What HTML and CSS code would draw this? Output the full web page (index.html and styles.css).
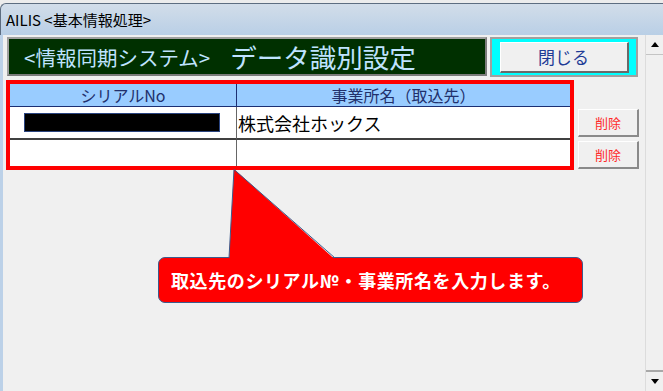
FILE: index.html
```html
<!DOCTYPE html>
<html lang="ja">
  <head>
    <meta charset="UTF-8" />
    <meta name="viewport" content="width=device-width, initial-scale=1.0" />
    <title>AILIS &lt;基本情報処理&gt;</title>
    <link rel="stylesheet" href="styles.css">
  </head>
  <body>
    <div class="window">
      <!-- タイトルバー -->
      <div class="titlebar">AILIS &lt;基本情報処理&gt;</div>

      <div class="client">
        <div class="content">
          <!-- 見出し + 閉じる -->
          <div class="top-row">
            <div class="banner">
              <span class="sub">&lt;情報同期システム&gt;</span>
              <span class="main">データ識別設定</span>
            </div>
            <div class="close-frame">
              <button class="close-btn">閉じる</button>
            </div>
          </div>

          <!-- 一覧 -->
          <div class="grid-row">
            <div class="grid-box">
              <div class="cell hdr col1">シリアルNo</div>
              <div class="cell hdr">事業所名（取込先）</div>
              <div class="cell row1 col1"><span class="mask"></span></div>
              <div class="cell row1 name">株式会社ホックス</div>
              <div class="cell row2 col1"></div>
              <div class="cell row2"></div>
            </div>
            <div class="del-col">
              <button class="del-btn">削除</button>
              <button class="del-btn">削除</button>
            </div>
          </div>

          <!-- 吹き出し -->
          <div class="callout">
            <svg class="tail" width="180" height="92" viewBox="0 0 180 92">
              <polygon points="70,90.5 75,0 176,90.5" fill="#ff0000" />
              <polyline points="70,89 75,0.5 176,89" fill="none" stroke="#3d5b8c" stroke-width="1" />
            </svg>
            <span>取込先のシリアル№・事業所名を入力します。</span>
          </div>
        </div>

        <!-- スクロールバー -->
        <div class="scrollbar">
          <div class="sb-up"><span class="arrow-up"></span></div>
          <div class="sb-track"></div>
          <div class="sb-down"><span class="arrow-down"></span></div>
        </div>
      </div>
    </div>
  </body>
</html>
```

FILE: styles.css
```css
body {
  margin: 0;
  background-color: #ececec;
  font-family: "Noto Sans CJK JP", "Liberation Sans", sans-serif;
  overflow: hidden;
}
.window {
  margin-top: 3px;
  height: 388px;
  display: flex;
  flex-direction: column;
}
.titlebar {
  height: 31px;
  border-top: 1px solid #5d6d80;
  border-left: 1px solid #5d6d80;
  border-top-left-radius: 6px;
  background: linear-gradient(#d2dde9, #b9cfe6);
  font-size: 15px;
  color: #000;
  display: flex;
  align-items: center;
  padding-left: 5px;
}
.client {
  flex: 1;
  display: flex;
  border-left: 3px solid #bcd1e8;
  background-color: #f0f0f0;
}
.content {
  flex: 1;
  position: relative;
  padding: 2px 0 0 3px;
}
.top-row {
  display: flex;
  align-items: flex-start;
}
.banner {
  width: 480px;
  height: 39px;
  box-sizing: border-box;
  margin-left: 1px;
  background-color: #003000;
  border: 2px solid;
  border-color: #a0a0a0 #7c7c7c #7c7c7c #a0a0a0;
  display: flex;
  align-items: center;
  padding-left: 15px;
  color: #bfe3ff;
  white-space: nowrap;
}
.banner .sub {
  font-size: 20.5px;
}
.banner .main {
  font-size: 26.5px;
  margin-left: 20px;
}
.close-frame {
  width: 148px;
  height: 40px;
  box-sizing: border-box;
  margin-left: 3px;
  background-color: #00ffff;
  border: 2px solid #a0a0a0;
  display: flex;
  align-items: center;
  justify-content: center;
}
.close-btn {
  width: 129px;
  height: 31px;
  box-sizing: border-box;
  padding: 0;
  background-color: #f0f0f0;
  border-style: solid;
  border-width: 1px 2px 2px 1px;
  border-color: #ffffff #6a6a6a #6a6a6a #ffffff;
  font-family: "Noto Sans CJK JP", sans-serif;
  font-size: 17px;
  color: #1f3c96;
}
.grid-row {
  display: flex;
  margin-top: 3px;
}
.grid-box {
  width: 568px;
  height: 90px;
  box-sizing: border-box;
  border: 4px solid #ff0000;
  display: grid;
  grid-template-columns: 227px 333px;
  grid-template-rows: 23px 33px 26px;
}
.cell {
  box-sizing: border-box;
  background-color: #fff;
  display: flex;
  align-items: center;
}
.hdr {
  background-color: #99ccff;
  border-bottom: 1px solid #1c2f73;
  justify-content: center;
  font-size: 16px;
  color: #21306c;
}
.col1 {
  border-right: 1px solid #666;
}
.hdr.col1 {
  border-right-color: #1c2f73;
}
.row1 {
  border-bottom: 2px solid #404040;
}
.mask {
  display: block;
  margin-left: 14px;
  width: 196px;
  height: 19px;
  box-sizing: border-box;
  background-color: #000;
  border: 1px solid #2a4480;
}
.name {
  padding-left: 1px;
  font-size: 18px;
  color: #000;
}
.del-col {
  display: flex;
  flex-direction: column;
  gap: 4px;
  margin-left: 4px;
  padding-top: 29px;
}
.del-btn {
  width: 61px;
  height: 28px;
  box-sizing: border-box;
  padding: 0;
  background-color: #f0f0f0;
  border-style: solid;
  border-width: 1px 2px 2px 1px;
  border-color: #ffffff #8a8a8a #8a8a8a #ffffff;
  font-family: "Noto Sans CJK JP", sans-serif;
  font-size: 13px;
  color: #ff2a2a;
}
.callout {
  position: absolute;
  left: 155px;
  top: 222px;
  width: 425px;
  height: 46px;
  box-sizing: border-box;
  background-color: #ff0000;
  border: 1px solid #3d5b8c;
  border-radius: 7px;
  color: #fff;
  font-weight: bold;
  font-size: 18px;
  letter-spacing: 0.6px;
  display: flex;
  align-items: center;
  padding-left: 12px;
  white-space: nowrap;
}
.tail {
  position: absolute;
  left: 0;
  top: -89px;
  overflow: visible;
}
.scrollbar {
  width: 17px;
  border-left: 1px solid #dcdcdc;
  display: flex;
  flex-direction: column;
  background-color: #f0f0f0;
}
.sb-up {
  height: 19px;
  border-bottom: 1px solid #c4c4c4;
  display: flex;
  align-items: center;
  justify-content: center;
}
.sb-track {
  flex: 1;
}
.sb-down {
  height: 19px;
  border-top: 2px solid #a8a8a8;
  display: flex;
  align-items: center;
  justify-content: center;
}
.arrow-up {
  width: 0;
  height: 0;
  border-left: 4.5px solid transparent;
  border-right: 4.5px solid transparent;
  border-bottom: 5px solid #000;
}
.arrow-down {
  width: 0;
  height: 0;
  border-left: 4.5px solid transparent;
  border-right: 4.5px solid transparent;
  border-top: 5px solid #000;
}
```
